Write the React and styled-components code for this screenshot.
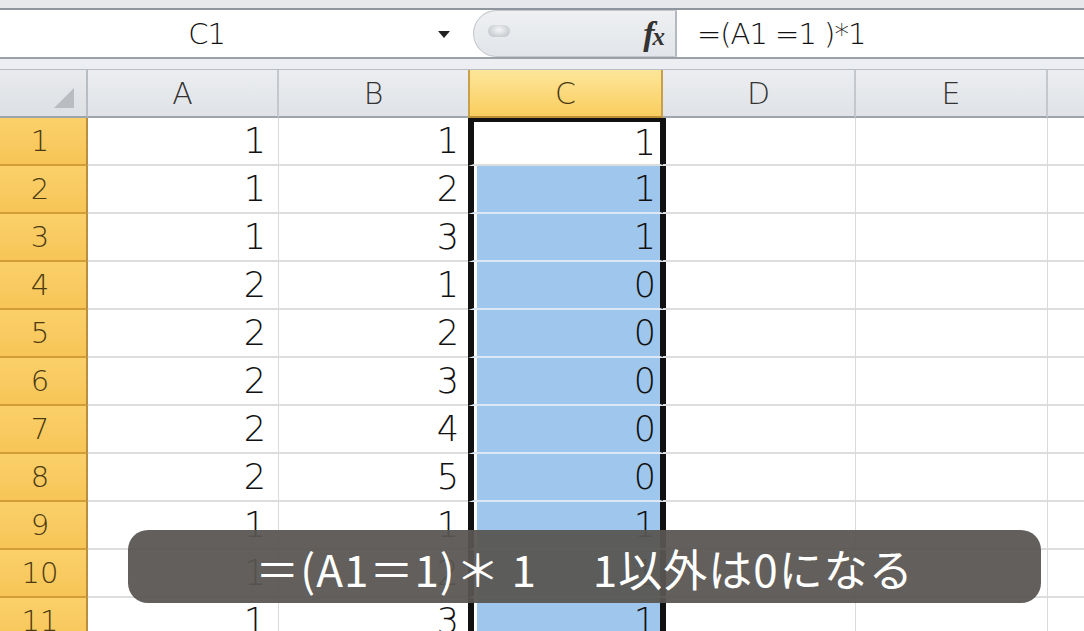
import React from 'react';
import styled, { createGlobalStyle } from 'styled-components';

const GlobalStyle = createGlobalStyle`
  html, body {
    margin: 0;
    padding: 0;
    background: #ffffff;
    overflow: hidden;
  }
  * {
    box-sizing: border-box;
  }
`;

const colA = [1, 1, 1, 2, 2, 2, 2, 2, 1, 1, 1];
const colB = [1, 2, 3, 1, 2, 3, 4, 5, 1, 2, 3];
const columns = ['A', 'B', 'C', 'D', 'E', 'F'];

const Page = styled.div`
  width: 1084px;
  height: 631px;
  position: relative;
  overflow: hidden;
  font-family: "DejaVu Sans", "Liberation Sans", sans-serif;
`;

const TopStrip = styled.div`
  height: 10px;
  background: #e6e8eb;
  border-bottom: 2px solid #8f959c;
`;

const FormulaBar = styled.div`
  display: flex;
  height: 49px;
  background: #ffffff;
  border-bottom: 2px solid #9ba1a8;
`;

const NameBox = styled.div`
  width: 473px;
  display: flex;
  align-items: center;
  position: relative;
  font-size: 29px;
  font-weight: 300;
  color: #111;
`;

const NameText = styled.span`
  width: 100%;
  text-align: center;
  padding-right: 60px;
  letter-spacing: -1px;
`;

const DropArrow = styled.span`
  position: absolute;
  left: 438px;
  top: 21px;
  width: 0;
  height: 0;
  border-left: 6px solid transparent;
  border-right: 6px solid transparent;
  border-top: 7px solid #222;
`;

const FxPanel = styled.div`
  width: 204px;
  display: flex;
  align-items: center;
  justify-content: space-between;
  padding: 0 12px 0 14px;
  background: linear-gradient(#eef0f2, #e2e5e9);
  border: 1px solid #c3c7cc;
  border-right: 2px solid #b4b9bf;
  border-radius: 26px 0 0 26px;
`;

const GripPill = styled.span`
  width: 22px;
  height: 12px;
  margin-bottom: 6px;
  border-radius: 6px;
  background: radial-gradient(ellipse at 50% 40%, #f4f5f6, #b9bdc2);
`;

const FxMark = styled.span`
  font-family: "Liberation Serif", "DejaVu Serif", serif;
  font-style: italic;
  font-weight: bold;
  font-size: 34px;
  color: #333;
  letter-spacing: -2px;

  small {
    font-size: 25px;
  }
`;

const FormulaInput = styled.div`
  flex: 1;
  display: flex;
  align-items: center;
  padding-left: 20px;
  font-size: 29px;
  font-weight: 300;
  color: #111;
  letter-spacing: -1px;
`;

const Gap = styled.div`
  height: 11px;
  background: #eceef1;
  border-bottom: 1px solid #b9bec4;
`;

const Grid = styled.div`
  display: grid;
  grid-template-columns: 88px 191px 191px 193px 193px 192px 192px;
  grid-auto-rows: 48px;
`;

const CornerCell = styled.div`
  position: relative;
  background: linear-gradient(#e8eaed, #dde0e4);
  border-right: 2px solid #b8bdc3;
  border-bottom: 2px solid #9da4ab;

  &::after {
    content: '';
    position: absolute;
    right: 12px;
    bottom: 8px;
    width: 0;
    height: 0;
    border-left: 20px solid transparent;
    border-bottom: 20px solid #b9bdc2;
  }
`;

const ColHeader = styled.div`
  display: flex;
  align-items: center;
  justify-content: center;
  font-size: 30px;
  font-weight: 300;
  color: ${p => (p.$active ? '#4a3a12' : '#333')};
  background: ${p =>
    p.$active
      ? 'linear-gradient(#fde69a, #f9cd5e)'
      : 'linear-gradient(#eceef1, #dfe2e6)'};
  border-right: 2px solid ${p => (p.$active ? '#c9a04a' : '#c4c8cd')};
  border-bottom: 2px solid ${p => (p.$active ? '#b98e35' : '#9da4ab')};
  ${p => p.$active && 'border-left: 2px solid #c9a04a; margin-left: -2px;'}
`;

const RowHeader = styled.div`
  display: flex;
  align-items: center;
  justify-content: center;
  padding-right: 6px;
  font-size: 29px;
  font-weight: 300;
  color: #4a3a12;
  background: linear-gradient(#fbd06a, #f7c557);
  border-right: 2px solid #b78f3f;
  border-bottom: 2px solid #d39e38;
`;

const Cell = styled.div`
  display: flex;
  align-items: center;
  justify-content: flex-end;
  padding-right: ${p => p.$pad || 12}px;
  font-size: 35px;
  font-weight: 300;
  color: #111;
  border-right: 1px solid #d9dadb;
  border-bottom: 2px solid #dcdddd;
`;

const SelCell = styled.div`
  display: flex;
  border-left: 6px solid #111;
  border-right: 6px solid #111;
  border-top: ${p => (p.$first ? '4px solid #111' : '0')};
  border-bottom: 2px solid ${p => (p.$first ? '#dcdddd' : '#dce8f4')};
  margin-left: -2px;
  margin-right: -3px;
  background: #ffffff;
`;

const SelFill = styled.div`
  flex: 1;
  display: flex;
  align-items: center;
  justify-content: flex-end;
  margin-left: ${p => (p.$active ? 0 : 3)}px;
  padding-right: 4px;
  font-size: 35px;
  font-weight: 300;
  color: #111;
  background: ${p => (p.$active ? '#ffffff' : '#9fc6ec')};
`;

const Caption = styled.div`
  position: absolute;
  left: 128px;
  top: 530px;
  width: 913px;
  height: 73px;
  border-radius: 20px;
  background: rgba(88, 85, 82, 0.94);
  display: flex;
  align-items: center;
  justify-content: center;
  padding-top: 2px;
  font-family: "Noto Sans CJK JP", "Noto Sans", sans-serif;
  font-size: 44px;
  color: #ffffff;
  letter-spacing: 1px;
  white-space: pre;
`;

export default function App() {
  const rows = colA.map((a, i) => ({
    n: i + 1,
    a,
    b: colB[i],
    c: a === 1 ? 1 : 0,
  }));

  return (
    <Page>
      <GlobalStyle />
      <TopStrip />
      <FormulaBar>
        <NameBox>
          <NameText>C1</NameText>
          <DropArrow />
        </NameBox>
        <FxPanel>
          <GripPill />
          <FxMark>f<small>x</small></FxMark>
        </FxPanel>
        <FormulaInput>=(A1 =1 )*1</FormulaInput>
      </FormulaBar>
      <Gap />
      <Grid>
        <CornerCell />
        {columns.map(c => (
          <ColHeader key={c} $active={c === 'C'}>{c}</ColHeader>
        ))}
        {rows.map(r => (
          <React.Fragment key={r.n}>
            <RowHeader>{r.n}</RowHeader>
            <Cell>{r.a}</Cell>
            <Cell $pad={10}>{r.b}</Cell>
            <SelCell $first={r.n === 1}>
              <SelFill $active={r.n === 1}>{r.c}</SelFill>
            </SelCell>
            <Cell />
            <Cell />
            <Cell />
          </React.Fragment>
        ))}
      </Grid>
      <Caption>{'＝(A1＝1)＊ 1　 1以外は0になる'}</Caption>
    </Page>
  );
}
